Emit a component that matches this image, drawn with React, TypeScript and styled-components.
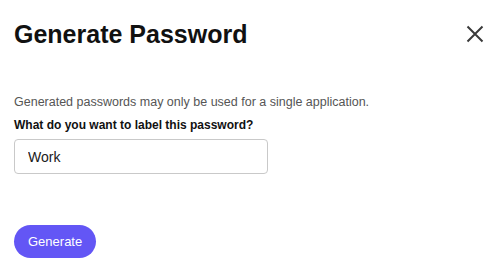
import React, { FC, useState } from 'react';
import styled, { createGlobalStyle } from 'styled-components';

const GlobalStyle = createGlobalStyle`
    html, body {
        margin: 0;
        padding: 0;
        background: #ffffff;
    }

    body {
        font-family: 'Liberation Sans', Arial, sans-serif;
        color: #111111;
    }
`;

const Dialog = styled.div`
    display: flex;
    flex-direction: column;
    width: 500px;
    height: 270px;
    box-sizing: border-box;
    padding: 18px 14px 12px 14px;
    background: #ffffff;
`;

const Header = styled.div`
    display: flex;
    flex-direction: row;
    justify-content: space-between;
    align-items: center;
    height: 32px;
`;

const Title = styled.h1`
    margin: 0;
    font-size: 25px;
    line-height: 32px;
    font-weight: 700;
    color: #111111;
`;

const CloseButton = styled.button`
    display: flex;
    justify-content: center;
    align-items: center;
    width: 22px;
    height: 22px;
    margin-right: 0;
    padding: 0;
    border: none;
    background: transparent;
    color: #3a3a3a;
    cursor: pointer;
`;

const Body = styled.div`
    display: flex;
    flex-direction: column;
    margin-top: 44px;
`;

const Description = styled.p`
    margin: 0;
    font-size: 12.5px;
    line-height: 16px;
    color: #555555;
`;

const Label = styled.label`
    margin-top: 8px;
    font-size: 12px;
    line-height: 15px;
    font-weight: 700;
    color: #111111;
`;

const Input = styled.input`
    width: 254px;
    height: 35px;
    box-sizing: border-box;
    margin-top: 6px;
    padding: 0 13px;
    border: 1px solid #c9c9c9;
    border-radius: 4px;
    font-family: inherit;
    font-size: 14px;
    color: #1a1a1a;
    outline: none;

    &:focus {
        border-color: #6356f5;
    }
`;

const Footer = styled.div`
    display: flex;
    flex-direction: row;
    margin-top: auto;
`;

const PrimaryButton = styled.button`
    height: 33px;
    padding: 0 14px;
    border: none;
    border-radius: 17px;
    background: #6356f5;
    color: #ffffff;
    font-family: inherit;
    font-size: 13px;
    cursor: pointer;

    :hover {
        background: #5446e6;
    }
`;

const CloseIcon: FC = () => (
    <svg width="18" height="18" viewBox="0 0 18 18" fill="none">
        <path d="M1.5 1.5L16.5 16.5M16.5 1.5L1.5 16.5" stroke="currentColor" strokeWidth="2" />
    </svg>
);

const App: FC = () => {
    const [label, setLabel] = useState('Work');

    return (
        <>
            <GlobalStyle />
            <Dialog>
                <Header>
                    <Title>Generate Password</Title>
                    <CloseButton type="button" aria-label="Close">
                        <CloseIcon />
                    </CloseButton>
                </Header>
                <Body>
                    <Description>Generated passwords may only be used for a single application.</Description>
                    <Label htmlFor="pw-label">What do you want to label this password?</Label>
                    <Input id="pw-label" value={label} onChange={(e) => setLabel(e.target.value)} />
                </Body>
                <Footer>
                    <PrimaryButton type="button">Generate</PrimaryButton>
                </Footer>
            </Dialog>
        </>
    );
};

export default App;
